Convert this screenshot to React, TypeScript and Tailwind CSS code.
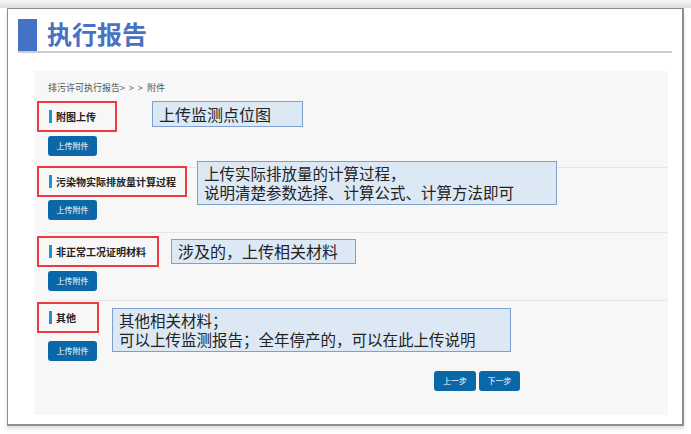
import React from 'react';

const cjk = { fontFamily: '"Noto Sans CJK SC", "Noto Sans", sans-serif' };

const Label = ({ text, width }: { text: string; width: string }) => (
    <div className={`ml-[3px] h-[31px] ${width} border-2 border-[#ec3b40] flex items-center pl-[10px]`}>
        <span className="w-[3px] h-[13px] bg-[#1596d6] mr-[4px]"></span>
        <span className="text-[10px] font-bold text-[#222] leading-none">{text}</span>
    </div>
);

const UploadButton = ({ className = '' }: { className?: string }) => (
    <button className={`block ml-[14px] w-[49px] h-[20px] rounded-[3px] bg-[#0b68a8] text-white text-[8px] leading-none ${className}`}>
        上传附件
    </button>
);

const Callout = ({ children, className }: { children: React.ReactNode; className: string }) => (
    <div className={`absolute bg-[#dde8f5] border border-[#7f9fcc] text-[#222] text-[15.5px] leading-[19px] pl-[6px] ${className}`}>
        {children}
    </div>
);

const Divider = () => <div className="ml-[14px] h-px bg-[#e6e6e6]"></div>;

const App = () => {
    return (
        <div className="w-[691px] h-[434px] bg-white overflow-hidden" style={cjk}>
            <div className="h-[8px] bg-gradient-to-b from-[#f6f6f6] to-[#dedede]"></div>
            <div className="ml-[7px] w-[677px] h-[418px] border border-[#8e8e8e] border-r-2 border-b-2 shadow-[0_3px_4px_rgba(0,0,0,0.12)] bg-white">
                {/* header */}
                <div className="mt-[10px] mx-[10px] flex items-end border-b-2 border-[#cdcdcd]">
                    <div className="w-[19px] h-[32px] bg-[#4472c4]"></div>
                    <div className="ml-[10px] mb-[4px] text-[25px] leading-[28px] font-bold text-[#4a72c2]">执行报告</div>
                </div>

                {/* panel */}
                <div className="relative mt-[18px] ml-[26px] w-[634px] h-[344px] bg-[#f7f7f7]">
                    <div className="pt-[11px] pl-[14px] text-[9px] leading-[12px] text-[#555] whitespace-pre">排污许可执行报告&gt;  &gt;  &gt;  附件</div>

                    {/* 附图上传 */}
                    <div className="mt-[7px]">
                        <Label text="附图上传" width="w-[80px]" />
                        <UploadButton className="mt-[4px]" />
                        <div className="h-[11px]"></div>
                        <Divider />
                    </div>

                    {/* 计算过程 */}
                    <div className="-mt-[2px]">
                        <Label text="污染物实际排放量计算过程" width="w-[150px]" />
                        <UploadButton className="mt-[3px]" />
                        <div className="h-[12px]"></div>
                        <Divider />
                    </div>

                    {/* 非正常工况 */}
                    <div className="mt-[3px]">
                        <Label text="非正常工况证明材料" width="w-[122px]" />
                        <UploadButton className="mt-[4px]" />
                        <div className="h-[9px]"></div>
                        <Divider />
                    </div>

                    {/* 其他 */}
                    <div className="mt-[1px]">
                        <Label text="其他" width="w-[62px]" />
                        <UploadButton className="mt-[8px]" />
                    </div>

                    <div className="mt-[10px] flex justify-end gap-[3px] pr-[148px]">
                        <button className="w-[42px] h-[20px] rounded-[3px] bg-[#0b68a8] text-white text-[8px] leading-none">上一步</button>
                        <button className="w-[41px] h-[20px] rounded-[3px] bg-[#0b68a8] text-white text-[8px] leading-none">下一步</button>
                    </div>

                    {/* annotations */}
                    <Callout className="left-[118px] top-[30px] w-[151px] h-[26px] text-[16px] leading-[24px]">上传监测点位图</Callout>
                    <Callout className="left-[163px] top-[90px] w-[360px] h-[44px] pt-[2px]">
                        <div>上传实际排放量的计算过程，</div>
                        <div>说明清楚参数选择、计算公式、计算方法即可</div>
                    </Callout>
                    <Callout className="left-[137px] top-[168px] w-[185px] h-[25px] text-[16px] leading-[23px]">涉及的，上传相关材料</Callout>
                    <Callout className="left-[78px] top-[237px] w-[399px] h-[44px] pt-[2px]">
                        <div>其他相关材料；</div>
                        <div>可以上传监测报告；全年停产的，可以在此上传说明</div>
                    </Callout>
                </div>
            </div>
        </div>
    );
};

export default App;
